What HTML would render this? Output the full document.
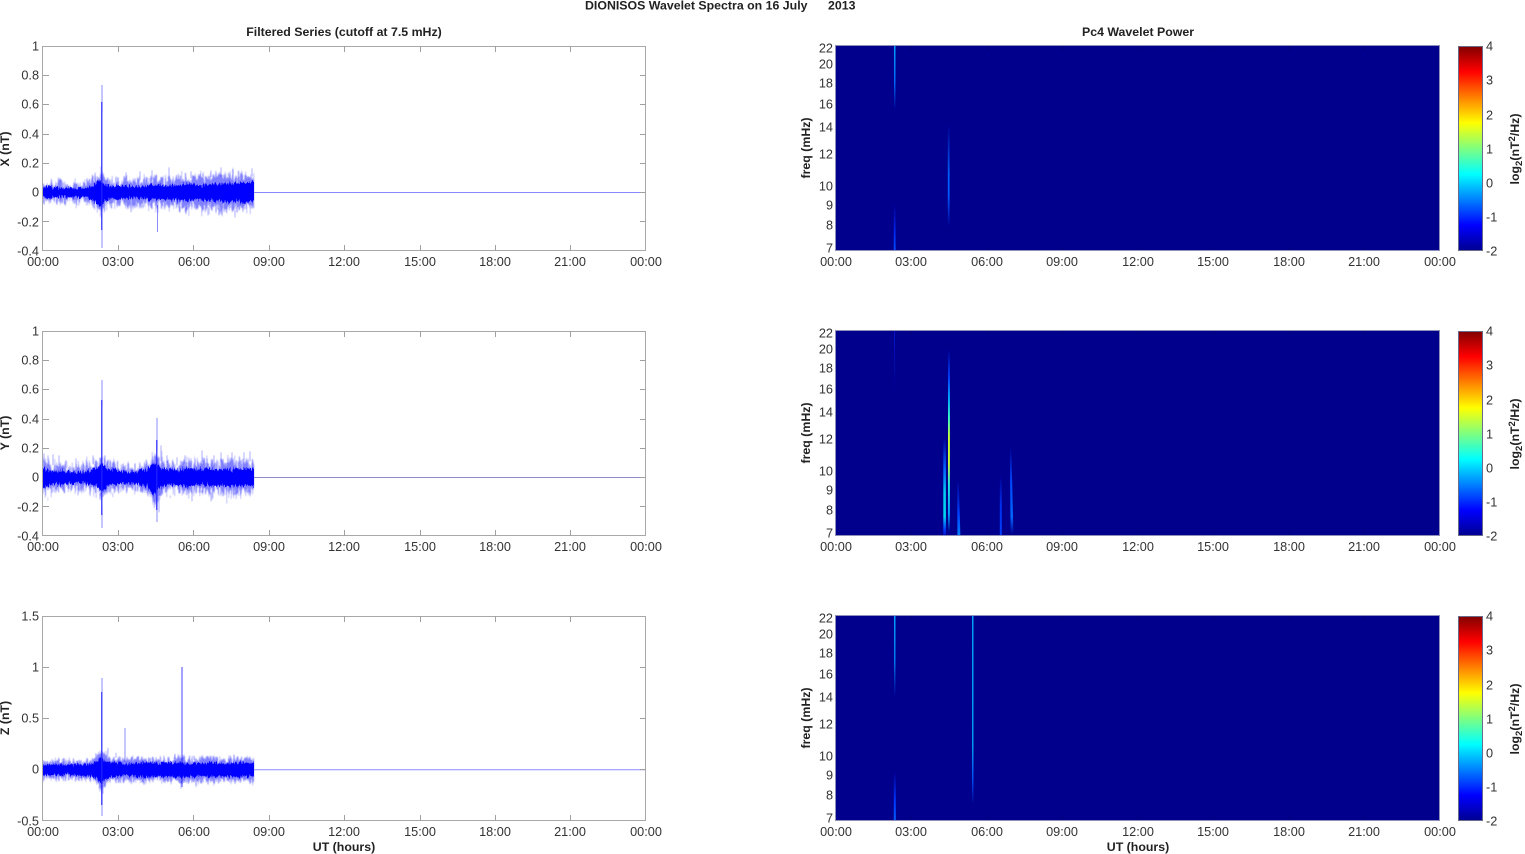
<!DOCTYPE html>
<html>
<head>
<meta charset="utf-8">
<title>DIONISOS Wavelet Spectra</title>
<style>
html,body{margin:0;padding:0;background:#fff;width:1525px;height:854px;overflow:hidden}
svg{display:block}
text{font-family:"Liberation Sans",Arial,sans-serif;font-size:12.7px;fill:#333}
.b{font-weight:bold;fill:#222;font-size:12.35px}
.xl text{text-anchor:middle;dominant-baseline:central}
.yl text{text-anchor:end;dominant-baseline:central}
.cl text{text-anchor:start;dominant-baseline:central}
.frame{fill:none;stroke:#a8a8a8;stroke-width:1}
.sframe{fill:none;stroke:#8f8fb8;stroke-width:1}
.tick{fill:none;stroke:#a0a0a0;stroke-width:1}
.dtick{fill:none;stroke:#00006a;stroke-width:1}
</style>
</head>
<body>
<svg width="1525" height="854" viewBox="0 0 1525 854" xmlns="http://www.w3.org/2000/svg">
<defs>
<linearGradient id="jet" x1="0" y1="1" x2="0" y2="0">
<stop offset="0" stop-color="#00008f"/><stop offset=".125" stop-color="#0000ff"/><stop offset=".375" stop-color="#00ffff"/><stop offset=".625" stop-color="#ffff00"/><stop offset=".875" stop-color="#ff0000"/><stop offset="1" stop-color="#800000"/>
</linearGradient>
<filter id="nl1" x="-1%" y="-60%" width="102%" height="220%" color-interpolation-filters="sRGB"><feTurbulence type="fractalNoise" baseFrequency="0.85 0.05" numOctaves="2" seed="3"/><feColorMatrix values="1 0 0 0 0 0 0 0 0 0 0 0 0 0 .5 0 0 0 0 1" result="m"/><feDisplacementMap in="SourceGraphic" in2="m" scale="26" xChannelSelector="B" yChannelSelector="R"/><feGaussianBlur stdDeviation="0.4"/></filter>
<filter id="nd1" x="-1%" y="-60%" width="102%" height="220%" color-interpolation-filters="sRGB"><feTurbulence type="fractalNoise" baseFrequency="0.9 0.06" numOctaves="2" seed="8"/><feColorMatrix values="1 0 0 0 0 0 0 0 0 0 0 0 0 0 .5 0 0 0 0 1" result="m"/><feDisplacementMap in="SourceGraphic" in2="m" scale="9" xChannelSelector="B" yChannelSelector="R"/><feGaussianBlur stdDeviation="0.35"/></filter>
<filter id="nl2" x="-1%" y="-60%" width="102%" height="220%" color-interpolation-filters="sRGB"><feTurbulence type="fractalNoise" baseFrequency="0.85 0.05" numOctaves="2" seed="14"/><feColorMatrix values="1 0 0 0 0 0 0 0 0 0 0 0 0 0 .5 0 0 0 0 1" result="m"/><feDisplacementMap in="SourceGraphic" in2="m" scale="30" xChannelSelector="B" yChannelSelector="R"/><feGaussianBlur stdDeviation="0.4"/></filter>
<filter id="nd2" x="-1%" y="-60%" width="102%" height="220%" color-interpolation-filters="sRGB"><feTurbulence type="fractalNoise" baseFrequency="0.9 0.06" numOctaves="2" seed="21"/><feColorMatrix values="1 0 0 0 0 0 0 0 0 0 0 0 0 0 .5 0 0 0 0 1" result="m"/><feDisplacementMap in="SourceGraphic" in2="m" scale="10" xChannelSelector="B" yChannelSelector="R"/><feGaussianBlur stdDeviation="0.35"/></filter>
<filter id="nl3" x="-1%" y="-60%" width="102%" height="220%" color-interpolation-filters="sRGB"><feTurbulence type="fractalNoise" baseFrequency="0.85 0.05" numOctaves="2" seed="33"/><feColorMatrix values="1 0 0 0 0 0 0 0 0 0 0 0 0 0 .5 0 0 0 0 1" result="m"/><feDisplacementMap in="SourceGraphic" in2="m" scale="16" xChannelSelector="B" yChannelSelector="R"/><feGaussianBlur stdDeviation="0.4"/></filter>
<filter id="nd3" x="-1%" y="-60%" width="102%" height="220%" color-interpolation-filters="sRGB"><feTurbulence type="fractalNoise" baseFrequency="0.9 0.06" numOctaves="2" seed="41"/><feColorMatrix values="1 0 0 0 0 0 0 0 0 0 0 0 0 0 .5 0 0 0 0 1" result="m"/><feDisplacementMap in="SourceGraphic" in2="m" scale="7" xChannelSelector="B" yChannelSelector="R"/><feGaussianBlur stdDeviation="0.35"/></filter>
<filter id="bl" x="-300%" y="-5%" width="700%" height="110%"><feGaussianBlur stdDeviation="0.35 0.3"/></filter>
<linearGradient id="a1" x1="0" y1="46" x2="0" y2="110" gradientUnits="userSpaceOnUse"><stop offset="0" stop-color="#00a0ff"/><stop offset=".55" stop-color="#0068f8"/><stop offset="1" stop-color="#000090"/></linearGradient>
<linearGradient id="a2" x1="0" y1="205" x2="0" y2="251" gradientUnits="userSpaceOnUse"><stop offset="0" stop-color="#000090"/><stop offset=".6" stop-color="#0028f0"/><stop offset="1" stop-color="#0050ff"/></linearGradient>
<linearGradient id="a3" x1="0" y1="125" x2="0" y2="226" gradientUnits="userSpaceOnUse"><stop offset="0" stop-color="#000090"/><stop offset=".5" stop-color="#0060ff"/><stop offset=".7" stop-color="#0058ff"/><stop offset="1" stop-color="#000090"/></linearGradient>
<linearGradient id="b1" x1="0" y1="350" x2="0" y2="532" gradientUnits="userSpaceOnUse"><stop offset="0" stop-color="#000090"/><stop offset=".15" stop-color="#0040ff"/><stop offset=".27" stop-color="#00b0ff"/><stop offset=".38" stop-color="#40ffc0"/><stop offset=".48" stop-color="#c8ff30"/><stop offset=".62" stop-color="#c8ff30"/><stop offset=".74" stop-color="#20e8e0"/><stop offset=".9" stop-color="#00a0ff"/><stop offset="1" stop-color="#000090"/></linearGradient>
<linearGradient id="b2" x1="0" y1="438" x2="0" y2="536" gradientUnits="userSpaceOnUse"><stop offset="0" stop-color="#000090"/><stop offset=".3" stop-color="#0060ff"/><stop offset=".55" stop-color="#00c8f0"/><stop offset=".8" stop-color="#00d8f0"/><stop offset=".93" stop-color="#0040ff"/><stop offset="1" stop-color="#0010c0"/></linearGradient>
<linearGradient id="b3" x1="0" y1="480" x2="0" y2="536" gradientUnits="userSpaceOnUse"><stop offset="0" stop-color="#000090"/><stop offset=".6" stop-color="#0040ff"/><stop offset="1" stop-color="#0080ff"/></linearGradient>
<linearGradient id="b4" x1="0" y1="476" x2="0" y2="536" gradientUnits="userSpaceOnUse"><stop offset="0" stop-color="#000090"/><stop offset=".5" stop-color="#0030f0"/><stop offset="1" stop-color="#0040ff"/></linearGradient>
<linearGradient id="b5" x1="0" y1="448" x2="0" y2="534" gradientUnits="userSpaceOnUse"><stop offset="0" stop-color="#000090"/><stop offset=".4" stop-color="#0048ff"/><stop offset=".8" stop-color="#0068ff"/><stop offset="1" stop-color="#000090"/></linearGradient>
<linearGradient id="b6" x1="0" y1="331" x2="0" y2="390" gradientUnits="userSpaceOnUse"><stop offset="0" stop-color="#0018c8"/><stop offset="1" stop-color="#000090"/></linearGradient>
<linearGradient id="c1" x1="0" y1="616" x2="0" y2="696" gradientUnits="userSpaceOnUse"><stop offset="0" stop-color="#00a0ff"/><stop offset=".55" stop-color="#0078f0"/><stop offset="1" stop-color="#000090"/></linearGradient>
<linearGradient id="c2" x1="0" y1="772" x2="0" y2="821" gradientUnits="userSpaceOnUse"><stop offset="0" stop-color="#000090"/><stop offset=".6" stop-color="#0038ff"/><stop offset="1" stop-color="#0060ff"/></linearGradient>
<linearGradient id="c3" x1="0" y1="616" x2="0" y2="804" gradientUnits="userSpaceOnUse"><stop offset="0" stop-color="#00a0f8"/><stop offset=".7" stop-color="#0098f0"/><stop offset=".88" stop-color="#0048f0"/><stop offset="1" stop-color="#000090"/></linearGradient>
</defs>
<rect width="1525" height="854" fill="#fff"/>

<text x="585" y="9.5" class="b" xml:space="preserve" style="white-space:pre">DIONISOS Wavelet Spectra on 16 July</text>
<text x="828" y="9.5" class="b">2013</text>
<text x="344" y="36" class="b" text-anchor="middle">Filtered Series (cutoff at 7.5 mHz)</text>
<text x="1138" y="36" class="b" text-anchor="middle">Pc4 Wavelet Power</text>

<!-- LEFT PANEL X -->
<g transform="translate(43,192.4)">
<g filter="url(#nl1)">
<path fill="#0000ff" fill-opacity=".5" d="M0,-10L5,-8 10,-7 15,-9 20,-8 26,-7 32,-9 38,-8 44,-10 50,-13 54,-17 58,-20 62,-15 66,-12 72,-11 78,-10 84,-13 90,-11 96,-12 102,-11 108,-13 114,-15 120,-12 126,-13 132,-12 138,-15 144,-13 150,-15 156,-17 162,-14 168,-15 174,-17 180,-15 186,-18 192,-16 198,-18 204,-16 211,-17V14L204,16 198,15 192,18 186,15 180,20 174,16 168,15 162,18 156,15 150,14 144,17 138,14 132,13 126,15 120,12 114,16 108,14 102,12 96,13 90,12 84,12 78,11 72,12 66,12 62,15 58,19 54,15 50,11 44,9 38,8 32,9 26,7 20,8 15,8 10,7 5,8 0,8Z"/>
</g>
<path fill="none" stroke="#0000ff" stroke-opacity=".32" stroke-width="1" d="M83,-12V-20M97,-12V-21M109,-13V-22M126,-14V-25M148,-14V-21M168,-15V-22M178,-16V-25M190,-16V-23M209,-16V-24M88,12V20M143,16V22M165,15V23M176,16V23M192,18V25M137,14V20"/>
<g filter="url(#nd1)">
<path fill="#0000ff" d="M0,-6L8,-5 16,-4 24,-5 32,-4 40,-5 48,-6 52,-8 57,-13 61,-8 66,-7 74,-6 82,-7 90,-6 98,-6 106,-7 114,-8 122,-6 130,-7 138,-7 146,-8 154,-8 162,-7 170,-9 178,-9 186,-9 194,-10 202,-9 211,-10V9L202,10 194,9 186,10 178,9 170,8 162,8 154,8 146,7 138,8 130,7 122,7 114,8 106,7 98,6 90,6 82,7 74,6 66,7 61,9 57,14 52,9 48,7 40,5 32,5 24,5 16,4 8,5 0,6Z"/>
</g>
</g>
<path fill="none" stroke="#0000ff" stroke-opacity=".45" stroke-width="1" d="M102,85V112M102,230V248M157.5,205V232"/>
<path fill="none" stroke="#2222ff" stroke-width="1.2" d="M101.8,102V230"/>
<path stroke="#8a8aff" fill="none" d="M254,192.5H646"/>

<!-- LEFT PANEL Y -->
<g transform="translate(43,477.4)">
<g filter="url(#nl2)">
<path fill="#0000ff" fill-opacity=".5" d="M0,-18L4,-13 10,-11 16,-12 22,-10 28,-9 34,-10 40,-11 46,-13 52,-15 58,-18 64,-13 70,-12 76,-11 82,-10 88,-9 94,-10 100,-10 106,-13 112,-24 116,-18 122,-14 128,-15 134,-12 140,-14 146,-16 152,-14 158,-15 164,-17 170,-14 176,-16 182,-14 188,-17 194,-15 200,-17 206,-16 211,-11V12L206,15 200,14 194,17 188,14 182,15 176,13 170,16 164,14 158,13 152,12 146,17 140,13 134,14 128,13 122,14 116,19 112,27 108,16 104,12 98,11 92,10 86,11 80,10 74,11 68,12 64,13 59,17 54,14 48,12 42,10 36,11 30,12 24,11 18,12 12,10 6,13 0,15Z"/>
</g>
<path fill="none" stroke="#0000ff" stroke-opacity=".32" stroke-width="1" d="M1,-14V-24M5,-12V-22M10,-12V-23M16,-12V-22M33,-10V-19M50,-13V-22M62,-14V-22M118,-16V-32M124,-15V-22M134,-12V-20M142,-14V-22M159,-15V-27M171,-15V-22M178,-16V-25M189,-17V-25M201,-17V-25M207,-16V-26M35,11V18M116,20V35M149,15V24M168,15V24M57,16V22"/>
<g filter="url(#nd2)">
<path fill="#0000ff" d="M0,-9L8,-7 16,-6 24,-6 32,-5 40,-6 48,-7 54,-10 59,-14 64,-8 72,-7 80,-6 88,-6 96,-7 104,-7 110,-14 114,-12 120,-8 128,-9 136,-7 144,-9 152,-8 160,-9 168,-8 176,-8 184,-8 192,-8 200,-9 206,-8 211,-9V9L206,8 200,9 192,9 184,8 176,9 168,8 160,8 152,8 144,9 136,8 128,8 120,8 114,13 110,18 104,8 96,7 88,7 80,6 72,7 64,8 59,15 54,9 48,7 40,6 32,6 24,6 16,7 8,8 0,10Z"/>
</g>
</g>
<path fill="none" stroke="#0000ff" stroke-opacity=".45" stroke-width="1" d="M102,380V407M102,507V528M157,418V450M157,500V522"/>
<path fill="none" stroke="#2222ff" stroke-width="1.2" d="M101.8,400V515M156.8,440V510"/>
<path stroke="#8a8acc" fill="none" d="M254,477.5H646"/>

<!-- LEFT PANEL Z -->
<g transform="translate(43,769.8)">
<g filter="url(#nl3)">
<path fill="#0000ff" fill-opacity=".5" d="M0,-10L5,-9 10,-10 16,-9 22,-9 28,-8 34,-8 40,-9 46,-10 52,-13 58,-18 64,-15 70,-12 76,-11 84,-10 92,-11 100,-10 108,-11 116,-10 124,-10 132,-11 140,-12 148,-10 156,-11 164,-12 172,-11 180,-10 188,-11 196,-11 204,-12 211,-11V12L204,10 196,11 188,12 180,11 172,12 164,11 156,13 148,12 140,12 132,10 124,12 116,10 108,12 100,11 92,11 84,10 76,10 68,10 62,15 58,20 54,13 48,10 42,9 36,9 28,8 20,8 12,9 6,9 0,10Z"/>
</g>
<path fill="none" stroke="#0000ff" stroke-opacity=".3" stroke-width="1" d="M65,-15V-22M73,-12V-17M132,-11V-16M151,-10V-14M138,12V19M60,15V24"/>
<g filter="url(#nd3)">
<path fill="#0000ff" d="M0,-6L8,-6 16,-5 24,-5 32,-5 40,-5 48,-6 54,-8 58,-13 62,-9 68,-7 76,-7 84,-6 92,-7 100,-7 108,-7 116,-6 124,-7 132,-7 140,-7 148,-6 156,-7 164,-7 172,-7 180,-6 188,-7 196,-7 204,-7 211,-7V7L204,7 196,7 188,7 180,7 172,7 164,7 156,7 148,7 140,7 132,7 124,7 116,7 108,7 100,7 92,7 84,6 76,6 68,7 62,10 58,14 54,9 48,7 40,6 32,5 24,5 16,5 8,6 0,6Z"/>
</g>
</g>
<path fill="none" stroke="#0000ff" stroke-opacity=".45" stroke-width="1" d="M102,678V692M102,785V816M125,728V762"/>
<path fill="none" stroke="#0000ff" stroke-opacity=".45" stroke-width="1.6" d="M182,667V765M182,775V787"/>
<path fill="none" stroke="#2222ff" stroke-width="1.2" d="M101.8,692V805"/>
<path stroke="#8a8aff" fill="none" d="M254,769.8H646"/>

<!-- LEFT FRAMES + TICKS -->
<g class="frame">
<rect x="42.5" y="46.5" width="603" height="204"/>
<rect x="42.5" y="331.5" width="603" height="204"/>
<rect x="42.5" y="616.5" width="603" height="204"/>
</g>
<path class="tick" d="M118.5,46V52M193.5,46V52M269.5,46V52M344.5,46V52M420.5,46V52M495.5,46V52M570.5,46V52M118.5,251V245M193.5,251V245M269.5,251V245M344.5,251V245M420.5,251V245M495.5,251V245M570.5,251V245
M43,75.5H49M43,104.5H49M43,134.5H49M43,163.5H49M43,221.5H49M646,75.5H640M646,104.5H640M646,134.5H640M646,163.5H640M646,192.5H640M646,221.5H640
M118.5,331V337M193.5,331V337M269.5,331V337M344.5,331V337M420.5,331V337M495.5,331V337M570.5,331V337M118.5,536V530M193.5,536V530M269.5,536V530M344.5,536V530M420.5,536V530M495.5,536V530M570.5,536V530
M43,360.5H49M43,389.5H49M43,419.5H49M43,448.5H49M43,506.5H49M646,360.5H640M646,389.5H640M646,419.5H640M646,448.5H640M646,477.5H640M646,506.5H640
M118.5,616V622M193.5,616V622M269.5,616V622M344.5,616V622M420.5,616V622M495.5,616V622M570.5,616V622M118.5,821V815M193.5,821V815M269.5,821V815M344.5,821V815M420.5,821V815M495.5,821V815M570.5,821V815
M43,667.5H49M43,718.5H49M646,667.5H640M646,718.5H640M646,769.5H640"/>

<g class="yl">
<text x="39" y="46.5">1</text><text x="39" y="75.5">0.8</text><text x="39" y="104.5">0.6</text><text x="39" y="134.5">0.4</text><text x="39" y="163.5">0.2</text><text x="39" y="192.5">0</text><text x="39" y="222.5">-0.2</text><text x="39" y="251.5">-0.4</text>
<text x="39" y="331.5">1</text><text x="39" y="360.5">0.8</text><text x="39" y="389.5">0.6</text><text x="39" y="419.5">0.4</text><text x="39" y="448.5">0.2</text><text x="39" y="477.5">0</text><text x="39" y="507.5">-0.2</text><text x="39" y="536.5">-0.4</text>
<text x="39" y="616.5">1.5</text><text x="39" y="667.5">1</text><text x="39" y="718.5">0.5</text><text x="39" y="769.5">0</text><text x="39" y="821.5">-0.5</text>
</g>
<g class="xl">
<text x="43" y="262">00:00</text><text x="118" y="262">03:00</text><text x="194" y="262">06:00</text><text x="269" y="262">09:00</text><text x="344" y="262">12:00</text><text x="420" y="262">15:00</text><text x="495" y="262">18:00</text><text x="570" y="262">21:00</text><text x="646" y="262">00:00</text>
<text x="43" y="547">00:00</text><text x="118" y="547">03:00</text><text x="194" y="547">06:00</text><text x="269" y="547">09:00</text><text x="344" y="547">12:00</text><text x="420" y="547">15:00</text><text x="495" y="547">18:00</text><text x="570" y="547">21:00</text><text x="646" y="547">00:00</text>
<text x="43" y="832">00:00</text><text x="118" y="832">03:00</text><text x="194" y="832">06:00</text><text x="269" y="832">09:00</text><text x="344" y="832">12:00</text><text x="420" y="832">15:00</text><text x="495" y="832">18:00</text><text x="570" y="832">21:00</text><text x="646" y="832">00:00</text>
<text x="836" y="262">00:00</text><text x="911" y="262">03:00</text><text x="987" y="262">06:00</text><text x="1062" y="262">09:00</text><text x="1138" y="262">12:00</text><text x="1213" y="262">15:00</text><text x="1289" y="262">18:00</text><text x="1364" y="262">21:00</text><text x="1440" y="262">00:00</text>
<text x="836" y="547">00:00</text><text x="911" y="547">03:00</text><text x="987" y="547">06:00</text><text x="1062" y="547">09:00</text><text x="1138" y="547">12:00</text><text x="1213" y="547">15:00</text><text x="1289" y="547">18:00</text><text x="1364" y="547">21:00</text><text x="1440" y="547">00:00</text>
<text x="836" y="832">00:00</text><text x="911" y="832">03:00</text><text x="987" y="832">06:00</text><text x="1062" y="832">09:00</text><text x="1138" y="832">12:00</text><text x="1213" y="832">15:00</text><text x="1289" y="832">18:00</text><text x="1364" y="832">21:00</text><text x="1440" y="832">00:00</text>
</g>

<text class="b" text-anchor="middle" transform="translate(9,149) rotate(-90)">X (nT)</text>
<text class="b" text-anchor="middle" transform="translate(9,433) rotate(-90)">Y (nT)</text>
<text class="b" text-anchor="middle" transform="translate(9,718) rotate(-90)">Z (nT)</text>
<text class="b" text-anchor="middle" x="344" y="851">UT (hours)</text>
<text class="b" text-anchor="middle" x="1138" y="851">UT (hours)</text>
<text class="b" text-anchor="middle" transform="translate(810,148) rotate(-90)">freq (mHz)</text>
<text class="b" text-anchor="middle" transform="translate(810,433) rotate(-90)">freq (mHz)</text>
<text class="b" text-anchor="middle" transform="translate(810,718) rotate(-90)">freq (mHz)</text>

<!-- RIGHT SPECTRA -->
<rect x="836" y="46" width="604" height="205" fill="#00008c"/>
<rect x="836" y="331" width="604" height="205" fill="#00008c"/>
<rect x="836" y="616" width="604" height="205" fill="#00008c"/>
<g filter="url(#bl)">
<rect x="894" y="46" width="1.5" height="64" fill="url(#a1)"/>
<rect x="893.8" y="205" width="1.8" height="46" fill="url(#a2)"/>
<rect x="947.8" y="125" width="1.8" height="101" fill="url(#a3)"/>
<rect x="894" y="331" width="1" height="59" fill="url(#b6)"/>
<rect x="948" y="350" width="1.9" height="182" fill="url(#b1)"/>
<rect x="943.3" y="438" width="2.6" height="98" fill="url(#b2)"/>
<path d="M957.2,480L958.8,480 960.4,536H957.4Z" fill="url(#b3)"/>
<rect x="999.8" y="476" width="2" height="60" fill="url(#b4)"/>
<path d="M1009.8,448L1011.4,448 1013.4,534H1010.6Z" fill="url(#b5)"/>
<rect x="894" y="616" width="1.5" height="80" fill="url(#c1)"/>
<rect x="893.8" y="772" width="2" height="49" fill="url(#c2)"/>
<rect x="972" y="616" width="1.5" height="188" fill="url(#c3)"/>
</g>
<path class="dtick" stroke-opacity=".5" d="M911.5,46V50M987.5,46V50M1062.5,46V50M1138.5,46V50M1213.5,46V50M1289.5,46V50M1364.5,46V50M911.5,251V247M987.5,251V247M1062.5,251V247M1138.5,251V247M1213.5,251V247M1289.5,251V247M1364.5,251V247
M911.5,331V335M987.5,331V335M1062.5,331V335M1138.5,331V335M1213.5,331V335M1289.5,331V335M1364.5,331V335M911.5,536V532M987.5,536V532M1062.5,536V532M1138.5,536V532M1213.5,536V532M1289.5,536V532M1364.5,536V532
M911.5,616V620M987.5,616V620M1062.5,616V620M1138.5,616V620M1213.5,616V620M1289.5,616V620M1364.5,616V620M911.5,821V817M987.5,821V817M1062.5,821V817M1138.5,821V817M1213.5,821V817M1289.5,821V817M1364.5,821V817"/>
<g class="sframe">
<rect x="835.5" y="45.5" width="604" height="205"/>
<rect x="835.5" y="330.5" width="604" height="205"/>
<rect x="835.5" y="615.5" width="604" height="205"/>
</g>

<g class="yl">
<text x="833" y="48.5">22</text><text x="833" y="64.5">20</text><text x="833" y="83.5">18</text><text x="833" y="104.5">16</text><text x="833" y="127.5">14</text><text x="833" y="154.5">12</text><text x="833" y="186.5">10</text><text x="833" y="205.5">9</text><text x="833" y="225.5">8</text><text x="833" y="248.5">7</text>
<text x="833" y="333.5">22</text><text x="833" y="349.5">20</text><text x="833" y="368.5">18</text><text x="833" y="389.5">16</text><text x="833" y="412.5">14</text><text x="833" y="439.5">12</text><text x="833" y="471.5">10</text><text x="833" y="490.5">9</text><text x="833" y="510.5">8</text><text x="833" y="533.5">7</text>
<text x="833" y="618.5">22</text><text x="833" y="634.5">20</text><text x="833" y="653.5">18</text><text x="833" y="674.5">16</text><text x="833" y="697.5">14</text><text x="833" y="724.5">12</text><text x="833" y="756.5">10</text><text x="833" y="775.5">9</text><text x="833" y="795.5">8</text><text x="833" y="818.5">7</text>
</g>

<!-- COLORBARS -->
<rect x="1458" y="46" width="25" height="205" fill="url(#jet)"/>
<rect x="1458" y="331" width="25" height="205" fill="url(#jet)"/>
<rect x="1458" y="616" width="25" height="205" fill="url(#jet)"/>
<g class="frame">
<rect x="1458.5" y="46.5" width="24" height="204" stroke="#6a6a8a"/>
<rect x="1458.5" y="331.5" width="24" height="204" stroke="#6a6a8a"/>
<rect x="1458.5" y="616.5" width="24" height="204" stroke="#6a6a8a"/>
</g>
<g class="cl">
<text x="1486" y="46.5">4</text><text x="1486" y="80.5">3</text><text x="1486" y="115.5">2</text><text x="1486" y="149.5">1</text><text x="1486" y="183.5">0</text><text x="1486" y="217.5">-1</text><text x="1486" y="251.5">-2</text>
<text x="1486" y="331.5">4</text><text x="1486" y="365.5">3</text><text x="1486" y="400.5">2</text><text x="1486" y="434.5">1</text><text x="1486" y="468.5">0</text><text x="1486" y="502.5">-1</text><text x="1486" y="536.5">-2</text>
<text x="1486" y="616.5">4</text><text x="1486" y="650.5">3</text><text x="1486" y="685.5">2</text><text x="1486" y="719.5">1</text><text x="1486" y="753.5">0</text><text x="1486" y="787.5">-1</text><text x="1486" y="821.5">-2</text>
</g>
<text class="b" text-anchor="middle" transform="translate(1519,149) rotate(-90)">log<tspan font-size="9.5" dy="3">2</tspan><tspan dy="-3">(nT</tspan><tspan font-size="9.5" dy="-4">2</tspan><tspan dy="4">/Hz)</tspan></text>
<text class="b" text-anchor="middle" transform="translate(1519,434) rotate(-90)">log<tspan font-size="9.5" dy="3">2</tspan><tspan dy="-3">(nT</tspan><tspan font-size="9.5" dy="-4">2</tspan><tspan dy="4">/Hz)</tspan></text>
<text class="b" text-anchor="middle" transform="translate(1519,719) rotate(-90)">log<tspan font-size="9.5" dy="3">2</tspan><tspan dy="-3">(nT</tspan><tspan font-size="9.5" dy="-4">2</tspan><tspan dy="4">/Hz)</tspan></text>
</svg>
</body>
</html>
